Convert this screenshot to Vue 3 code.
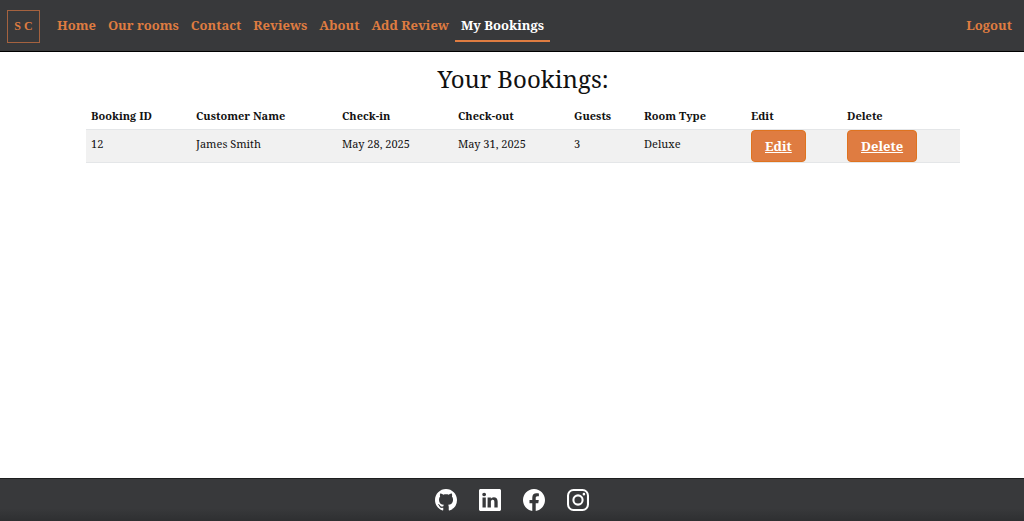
<script setup>
const links = ['Home', 'Our rooms', 'Contact', 'Reviews', 'About', 'Add Review', 'My Bookings']
const active = 'My Bookings'
const columns = [
  { label: 'Booking ID', width: 105 },
  { label: 'Customer Name', width: 146 },
  { label: 'Check-in', width: 116 },
  { label: 'Check-out', width: 116 },
  { label: 'Guests', width: 70 },
  { label: 'Room Type', width: 107 },
  { label: 'Edit', width: 96 },
  { label: 'Delete', width: 118 },
]
const total = columns.reduce((sum, c) => sum + c.width, 0)
const bookings = [
  { id: 12, name: 'James Smith', from: 'May 28, 2025', to: 'May 31, 2025', guests: 3, room: 'Deluxe' },
]
const socials = [
  {
    name: 'GitHub',
    path: 'M8 0C3.58 0 0 3.58 0 8c0 3.54 2.29 6.53 5.47 7.59.4.07.55-.17.55-.38 0-.19-.01-.82-.01-1.49-2.01.37-2.53-.49-2.69-.94-.09-.23-.48-.94-.82-1.13-.28-.15-.68-.52-.01-.53.63-.01 1.08.58 1.23.82.72 1.21 1.87.87 2.33.66.07-.52.28-.87.51-1.07-1.78-.2-3.64-.89-3.64-3.95 0-.87.31-1.59.82-2.15-.08-.2-.36-1.02.08-2.12 0 0 .67-.21 2.2.82.64-.18 1.32-.27 2-.27s1.36.09 2 .27c1.53-1.04 2.2-.82 2.2-.82.44 1.1.16 1.92.08 2.12.51.56.82 1.27.82 2.15 0 3.07-1.87 3.75-3.65 3.95.29.25.54.73.54 1.48 0 1.07-.01 1.93-.01 2.2 0 .21.15.46.55.38A8.01 8.01 0 0 0 16 8c0-4.42-3.58-8-8-8',
  },
  {
    name: 'LinkedIn',
    path: 'M0 1.146C0 .513.526 0 1.175 0h13.65C15.474 0 16 .513 16 1.146v13.708c0 .633-.526 1.146-1.175 1.146H1.175C.526 16 0 15.487 0 14.854zm4.943 12.248V6.169H2.542v7.225zm-1.2-8.212c.837 0 1.358-.554 1.358-1.248-.015-.709-.52-1.248-1.342-1.248S2.4 3.226 2.4 3.934c0 .694.521 1.248 1.327 1.248zm4.908 8.212V9.359c0-.216.016-.432.08-.586.173-.431.568-.878 1.232-.878.869 0 1.216.662 1.216 1.634v3.865h2.401V9.25c0-2.22-1.184-3.252-2.764-3.252-1.274 0-1.845.7-2.165 1.193v.025h-.016l.016-.025V6.169h-2.4c.03.678 0 7.225 0 7.225z',
  },
  {
    name: 'Facebook',
    path: 'M16 8.049c0-4.446-3.582-8.05-8-8.05C3.58 0-.002 3.603-.002 8.05c0 4.017 2.926 7.347 6.75 7.951v-5.625h-2.03V8.05H6.75V6.275c0-2.017 1.195-3.131 3.022-3.131.876 0 1.791.157 1.791.157v1.98h-1.009c-.993 0-1.303.621-1.303 1.258v1.51h2.218l-.354 2.326H9.25V16c3.824-.604 6.75-3.934 6.75-7.951',
  },
  {
    name: 'Instagram',
    path: 'M4.7 0h6.6A4.7 4.7 0 0 1 16 4.7v6.6a4.7 4.7 0 0 1-4.7 4.7H4.7A4.7 4.7 0 0 1 0 11.300V4.7A4.7 4.7 0 0 1 4.700 0zm0 1.500a3.200 3.200 0 0 0-3.200 3.200v6.600a3.200 3.200 0 0 0 3.200 3.200h6.600a3.200 3.200 0 0 0 3.200-3.200V4.700a3.200 3.200 0 0 0-3.200-3.200zM8 3.900a4.100 4.100 0 1 1 0 8.200 4.100 4.100 0 0 1 0-8.200zm0 1.500a2.600 2.600 0 1 0 0 5.200 2.600 2.600 0 0 0 0-5.200zM12.300 2.800a.95.95 0 1 1 0 1.900.95.95 0 0 1 0-1.900z',
  },
]
</script>

<template>
  <div class="page">
    <header class="bar">
      <a class="logo" href="#" aria-label="SC home">S C</a>
      <nav class="nav">
        <a v-for="link in links" :key="link" href="#" :class="{ active: link === active }">{{ link }}</a>
        <a class="logout" href="#">Logout</a>
      </nav>
    </header>

    <main class="content">
      <h1>Your Bookings:</h1>
      <table>
        <colgroup>
          <col v-for="c in columns" :key="c.label" :style="{ width: (c.width / total) * 100 + '%' }" />
        </colgroup>
        <thead>
          <tr>
            <th v-for="c in columns" :key="c.label" scope="col">{{ c.label }}</th>
          </tr>
        </thead>
        <tbody>
          <tr v-for="b in bookings" :key="b.id">
            <td>{{ b.id }}</td>
            <td>{{ b.name }}</td>
            <td>{{ b.from }}</td>
            <td>{{ b.to }}</td>
            <td>{{ b.guests }}</td>
            <td>{{ b.room }}</td>
            <td class="action"><a class="btn" href="#">Edit</a></td>
            <td class="action"><a class="btn" href="#">Delete</a></td>
          </tr>
        </tbody>
      </table>
    </main>

    <footer class="footer">
      <a v-for="s in socials" :key="s.name" href="#" :aria-label="s.name">
        <svg viewBox="0 0 16 16" aria-hidden="true"><path :d="s.path" fill-rule="evenodd" /></svg>
      </a>
    </footer>
  </div>
</template>

<style>
body {
  margin: 0;
  background: #fff;
}
</style>

<style scoped>
.page {
  display: flex;
  flex-direction: column;
  min-height: 100vh;
  font-family: "Noto Serif", "DejaVu Serif Condensed", "DejaVu Serif", serif;
  color: #111;
}

.bar {
  display: flex;
  align-items: center;
  box-sizing: border-box;
  min-height: 52px;
  padding: 1px 6px 0 7px;
  background: #38393b;
  border-bottom: 1px solid #000;
}

.logo {
  display: flex;
  align-items: center;
  justify-content: center;
  box-sizing: border-box;
  width: 33px;
  height: 33px;
  margin-right: 11px;
  border: 1px solid #a5623f;
  color: #df7c41;
  font: bold 12px "Liberation Serif", serif;
  text-decoration: none;
}

.nav {
  display: flex;
  flex: 1;
  align-items: center;
}

.nav a {
  padding: 5px 6px;
  border-bottom: 2px solid transparent;
  color: #df7c41;
  font-size: 13px;
  font-weight: bold;
  line-height: 20px;
  text-decoration: none;
  white-space: nowrap;
}

.nav a.active {
  border-bottom-color: #df7c41;
  color: #fff;
}

.nav a.logout {
  margin-left: auto;
}

.content {
  flex: 1;
  padding: 9px 64px 20px 86px;
}

h1 {
  margin: 0;
  font-size: 24px;
  font-weight: normal;
  line-height: 36px;
  text-align: center;
}

table {
  width: 100%;
  margin-top: 6px;
  border-collapse: collapse;
  table-layout: fixed;
  font-size: 11px;
  line-height: 16px;
}

th {
  padding: 5px;
  text-align: left;
  white-space: nowrap;
}

td {
  padding: 5px 5px 10px;
  background: #f1f1f1;
  border-top: 1px solid #e4e6e8;
  border-bottom: 1px solid #e4e6e8;
  white-space: nowrap;
}

td.action {
  padding: 0 5px;
}

.btn {
  display: inline-block;
  box-sizing: border-box;
  padding: 5px 13px;
  border: 1px solid #df731f;
  border-radius: 4px;
  background: #df7c41;
  color: #fff;
  font-size: 13px;
  font-weight: bold;
  line-height: 20px;
  vertical-align: top;
}

.footer {
  display: flex;
  justify-content: center;
  gap: 22px;
  box-sizing: border-box;
  min-height: 43px;
  padding: 10px 0;
  border-top: 1px solid #1d1e1f;
  background: linear-gradient(#38393b 70%, #2e2f31);
}

.footer a {
  height: 22px;
  color: #fff;
}

.footer svg {
  display: block;
  width: 22px;
  height: 22px;
  fill: currentColor;
}
</style>
